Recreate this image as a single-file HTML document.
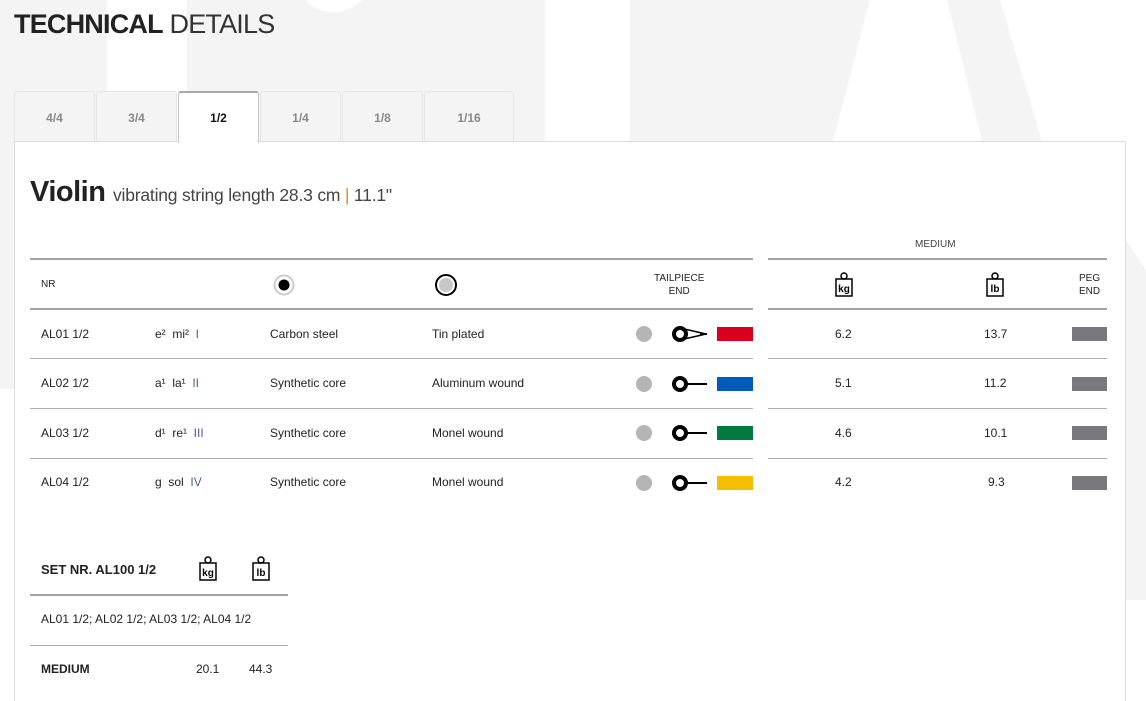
<!DOCTYPE html>
<html><head><meta charset="utf-8"><style>
*{margin:0;padding:0;box-sizing:border-box}
body{width:1146px;height:694px;overflow:hidden;background:#fff;font-family:"Liberation Sans",sans-serif;color:#222;position:relative}
.abs{position:absolute}
.t{position:absolute;font-size:12px;white-space:nowrap}
.line{position:absolute;height:1px;background:#b0b2b2}
.thick{height:2px;background:#a3a6a6}
.tab{position:absolute;top:91px;height:51px;background:#f4f4f4;border:1px solid #e6e6e6;border-bottom:none;border-radius:3px 3px 0 0;font-size:12px;font-weight:bold;color:#888;text-align:center;line-height:52px}
.swatch{position:absolute;width:36px;height:14px}
.peg{position:absolute;left:1072px;width:35px;height:14px;background:#77797b}
.dot{position:absolute;left:636px;width:16px;height:16px;border-radius:50%;background:#b5b5b5}
.rn{color:#4a5d8a}
</style></head><body>
<svg class="abs" style="left:0;top:0" width="1146" height="694">
<rect x="0" y="0" width="107" height="389" fill="#f3f4f3"/>
<rect x="187" y="0" width="358" height="141" fill="#f3f4f3"/>
<rect x="630" y="0" width="162" height="141" fill="#f3f4f3"/>
<polygon points="792,0 870,0 833,141 752,141" fill="#f3f4f3"/>
<polygon points="947,0 1000,0 1042,141 982,141" fill="#f3f4f3"/>
<polygon points="1126,240 1146,270 1146,600 1126,600" fill="#f3f4f3"/>
<path d="M305 0 Q333 25 362 0 Z" fill="#fff"/>
</svg>
<div class="t" style="left:14px;top:9px;font-size:27px;letter-spacing:-0.8px;color:#222"><b>TECHNICAL</b> <span style="font-weight:normal;color:#333">DETAILS</span></div>
<div class="tab" style="left:14px;width:81px">4/4</div>
<div class="tab" style="left:96px;width:81px">3/4</div>
<div class="tab" style="left:342px;width:81px">1/8</div>
<div class="tab" style="left:260px;width:81px">1/4</div>
<div class="tab" style="left:424px;width:90px">1/16</div>
<div class="abs" style="left:14px;top:141px;width:1112px;height:560px;background:#fff;border:1px solid #dcdcdc;border-bottom:none"></div>
<div class="tab" style="left:178px;width:81px;height:52px;background:#fff;color:#111;border:1px solid #c9c9c9;border-top:2px solid #a9a9a9;border-bottom:none;z-index:2;line-height:50px">1/2</div>
<div class="t" style="left:30px;top:176px;font-size:29px;font-weight:bold;letter-spacing:-0.5px">Violin <span style="font-size:17.5px;font-weight:normal;color:#444;letter-spacing:-0.2px">vibrating string length 28.3 cm <span style="color:#e08a2c">|</span> 11.1"</span></div>

<div class="t" style="left:915px;top:239px;font-size:10px;color:#444">MEDIUM</div>
<div class="line thick" style="left:30px;top:258px;width:723px"></div>
<div class="line thick" style="left:768px;top:258px;width:339px"></div>
<div class="t" style="left:41px;top:279px;font-size:10px">NR</div>
<svg class="abs" style="left:272px;top:273px" width="24" height="24"><circle cx="12" cy="12" r="9.5" fill="none" stroke="#ccc" stroke-width="2"/><circle cx="12" cy="12" r="5.5" fill="#000"/></svg>
<svg class="abs" style="left:434px;top:273px" width="24" height="24"><circle cx="12" cy="12" r="10" fill="none" stroke="#000" stroke-width="2"/><circle cx="12" cy="12" r="7" fill="#c8c8c8"/></svg>
<div class="t" style="left:654px;top:272px;font-size:10px;text-align:center;line-height:13px">TAILPIECE<br>END</div>
<svg class="abs" style="left:832px;top:271px" width="24" height="28"><circle cx="12" cy="5" r="3" fill="none" stroke="#000" stroke-width="1.5"/><rect x="4" y="8" width="16" height="17" fill="none" stroke="#000" stroke-width="1.5"/><text x="12" y="21" font-size="10" text-anchor="middle" font-family="Liberation Sans" font-weight="bold">kg</text></svg>
<svg class="abs" style="left:983px;top:271px" width="24" height="28"><circle cx="12" cy="5" r="3" fill="none" stroke="#000" stroke-width="1.5"/><rect x="4" y="8" width="16" height="17" fill="none" stroke="#000" stroke-width="1.5"/><text x="12" y="21" font-size="10" text-anchor="middle" font-family="Liberation Sans" font-weight="bold">lb</text></svg>
<div class="t" style="left:1079px;top:272px;font-size:10px;text-align:center;line-height:13px">PEG<br>END</div>
<div class="line thick" style="left:30px;top:308px;width:723px"></div>
<div class="line thick" style="left:768px;top:308px;width:339px"></div>

<div class="t" style="left:41px;top:327px">AL01 1/2</div><div class="t" style="left:155px;top:327px">e² &nbsp;mi² &nbsp;<span class="rn">I</span></div>
<div class="t" style="left:270px;top:327px">Carbon steel</div><div class="t" style="left:432px;top:327px">Tin plated</div>
<div class="dot" style="top:326px"></div>
<svg class="abs" style="left:670px;top:324px" width="40" height="20"><circle cx="10" cy="10" r="6" fill="none" stroke="#000" stroke-width="4"/><path d="M10 4 L36 10 L10 16" fill="none" stroke="#000" stroke-width="1.5"/><line x1="30" y1="10" x2="37" y2="10" stroke="#000" stroke-width="2"/></svg>
<div class="swatch" style="left:717px;top:327px;background:#d9001e"></div>
<div class="t" style="left:835px;top:327px">6.2</div><div class="t" style="left:984px;top:327px">13.7</div><div class="peg" style="top:327px"></div>
<div class="line" style="left:30px;top:358px;width:723px"></div><div class="line" style="left:768px;top:358px;width:339px"></div>

<div class="t" style="left:41px;top:376px">AL02 1/2</div><div class="t" style="left:155px;top:376px">a¹ &nbsp;la¹ &nbsp;<span class="rn">II</span></div>
<div class="t" style="left:270px;top:376px">Synthetic core</div><div class="t" style="left:432px;top:376px">Aluminum wound</div>
<div class="dot" style="top:376px"></div>
<svg class="abs" style="left:670px;top:374px" width="40" height="20"><circle cx="10" cy="10" r="6" fill="none" stroke="#000" stroke-width="4"/><line x1="16" y1="10" x2="37" y2="10" stroke="#000" stroke-width="2"/></svg>
<div class="swatch" style="left:717px;top:377px;background:#005bbb"></div>
<div class="t" style="left:835px;top:376px">5.1</div><div class="t" style="left:984px;top:376px">11.2</div><div class="peg" style="top:377px"></div>
<div class="line" style="left:30px;top:408px;width:723px"></div><div class="line" style="left:768px;top:408px;width:339px"></div>

<div class="t" style="left:41px;top:426px">AL03 1/2</div><div class="t" style="left:155px;top:426px">d¹ &nbsp;re¹ &nbsp;<span class="rn">III</span></div>
<div class="t" style="left:270px;top:426px">Synthetic core</div><div class="t" style="left:432px;top:426px">Monel wound</div>
<div class="dot" style="top:425px"></div>
<svg class="abs" style="left:670px;top:423px" width="40" height="20"><circle cx="10" cy="10" r="6" fill="none" stroke="#000" stroke-width="4"/><line x1="16" y1="10" x2="37" y2="10" stroke="#000" stroke-width="2"/></svg>
<div class="swatch" style="left:717px;top:426px;background:#007a3d"></div>
<div class="t" style="left:835px;top:426px">4.6</div><div class="t" style="left:984px;top:426px">10.1</div><div class="peg" style="top:426px"></div>
<div class="line" style="left:30px;top:458px;width:723px"></div><div class="line" style="left:768px;top:458px;width:339px"></div>

<div class="t" style="left:41px;top:475px">AL04 1/2</div><div class="t" style="left:155px;top:475px">g &nbsp;sol &nbsp;<span class="rn">IV</span></div>
<div class="t" style="left:270px;top:475px">Synthetic core</div><div class="t" style="left:432px;top:475px">Monel wound</div>
<div class="dot" style="top:475px"></div>
<svg class="abs" style="left:670px;top:473px" width="40" height="20"><circle cx="10" cy="10" r="6" fill="none" stroke="#000" stroke-width="4"/><line x1="16" y1="10" x2="37" y2="10" stroke="#000" stroke-width="2"/></svg>
<div class="swatch" style="left:717px;top:476px;background:#f5be00"></div>
<div class="t" style="left:835px;top:475px">4.2</div><div class="t" style="left:988px;top:475px">9.3</div><div class="peg" style="top:476px"></div>

<div class="t" style="left:41px;top:562px;font-size:13px;font-weight:bold">SET NR. AL100 1/2</div>
<svg class="abs" style="left:196px;top:555px" width="24" height="28"><circle cx="12" cy="5" r="3" fill="none" stroke="#000" stroke-width="1.5"/><rect x="4" y="8" width="16" height="17" fill="none" stroke="#000" stroke-width="1.5"/><text x="12" y="21" font-size="10" text-anchor="middle" font-family="Liberation Sans" font-weight="bold">kg</text></svg>
<svg class="abs" style="left:249px;top:555px" width="24" height="28"><circle cx="12" cy="5" r="3" fill="none" stroke="#000" stroke-width="1.5"/><rect x="4" y="8" width="16" height="17" fill="none" stroke="#000" stroke-width="1.5"/><text x="12" y="21" font-size="10" text-anchor="middle" font-family="Liberation Sans" font-weight="bold">lb</text></svg>
<div class="line thick" style="left:30px;top:594px;width:258px"></div>
<div class="t" style="left:41px;top:612px">AL01 1/2; AL02 1/2; AL03 1/2; AL04 1/2</div>
<div class="line" style="left:30px;top:645px;width:258px"></div>
<div class="t" style="left:41px;top:662px;font-weight:bold">MEDIUM</div>
<div class="t" style="left:196px;top:662px">20.1</div>
<div class="t" style="left:249px;top:662px">44.3</div>
</body></html>
